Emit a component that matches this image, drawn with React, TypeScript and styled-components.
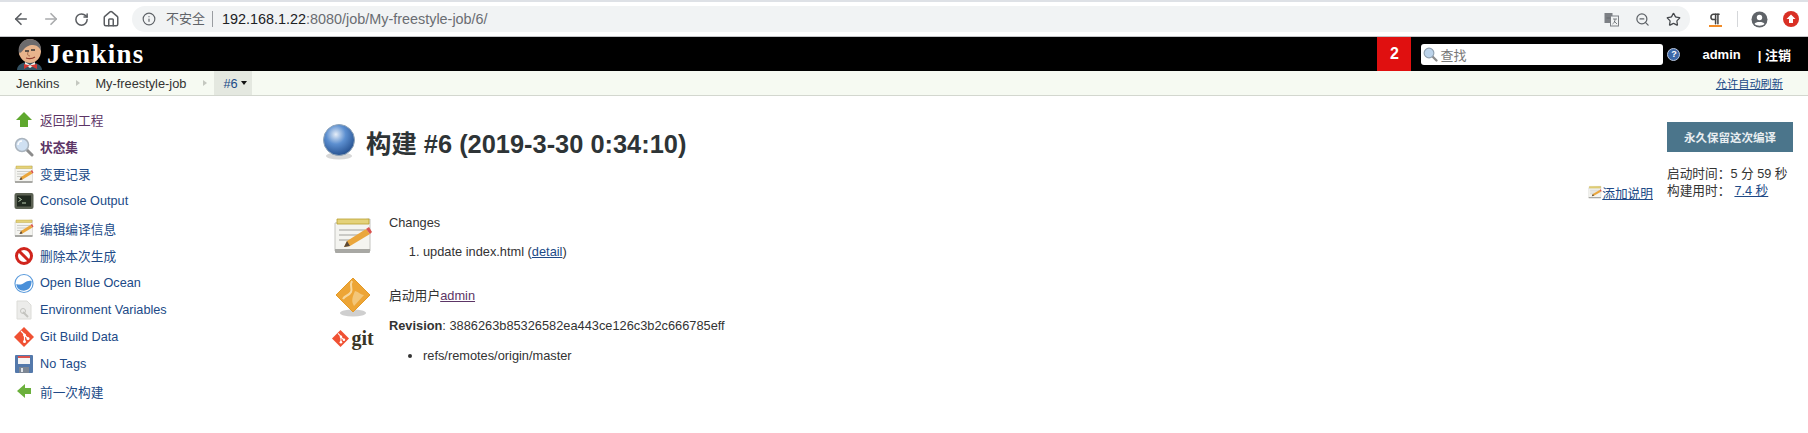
import styled, { createGlobalStyle } from "styled-components";
import { ArrowLeft, ArrowRight, RotateCw, Home, Info, ZoomOut, Star, Pilcrow } from "lucide-react";

const GlobalStyle = createGlobalStyle`
    html, body {
        margin: 0;
        padding: 0;
        background: #ffffff;
    }
    body {
        font-family: "Liberation Sans", "Noto Sans CJK SC", sans-serif;
        font-size: 12.8px;
        color: #333333;
        overflow: hidden;
    }
`;

const Page = styled.div`
    width: 1808px;
    height: 433px;
    overflow: hidden;
`;

/* browser chrome */
const Toolbar = styled.div`
    display: flex;
    align-items: center;
    height: 34px;
    border-top: 2px solid #dee1e6;
    border-bottom: 1px solid #c4c6c9;
    padding-left: 6px;
    background: #ffffff;
`;
const NavButton = styled.div<{ $off?: boolean }>`
    display: flex;
    align-items: center;
    justify-content: center;
    width: 30px;
    color: ${(p) => (p.$off ? "#a9abad" : "#5a5d61")};
`;
const Omnibox = styled.div`
    display: flex;
    align-items: center;
    width: 1558px;
    height: 26px;
    margin-left: 6px;
    padding-left: 10px;
    box-sizing: border-box;
    border-radius: 13px;
    background: #f1f3f4;
    color: #5f6368;
`;
const Insecure = styled.span`
    margin-left: 10px;
    padding-right: 7px;
    border-right: 1px solid #9a9da1;
    line-height: 16px;
    font-size: 13px;
`;
const Host = styled.span`
    margin-left: 9px;
    color: #202124;
    font-size: 14.4px;
`;
const UrlRest = styled.span`
    color: #6a6d72;
    font-size: 14.4px;
`;
const OmniIcons = styled.div`
    display: flex;
    align-items: center;
    gap: 16px;
    margin-left: auto;
    margin-right: 9px;
`;
const Extensions = styled.div`
    display: flex;
    align-items: center;
    margin-left: 18px;
`;
const PilcrowBox = styled.div`
    display: flex;
    flex-direction: column;
    align-items: center;
    width: 14px;
`;
const OrangeArrow = styled.div`
    width: 13px;
    height: 2px;
    margin-top: -1px;
    background: #f28c28;
`;
const Divider = styled.div`
    width: 1px;
    height: 16px;
    margin: 0 13px 0 15px;
    background: #d5d7da;
`;
const RedDot = styled.div`
    display: flex;
    margin-left: 15px;
`;

/* jenkins header */
const Header = styled.div`
    display: flex;
    align-items: center;
    height: 34px;
    background: #000000;
    color: #ffffff;
`;
const Logo = styled.div`
    display: flex;
    align-items: center;
    padding-left: 16px;
`;
const LogoText = styled.span`
    margin-left: 3px;
    font-family: "Liberation Serif", serif;
    font-size: 27px;
    font-weight: 700;
    letter-spacing: 1.3px;
`;
const Badge = styled.div`
    display: flex;
    align-items: center;
    justify-content: center;
    align-self: stretch;
    width: 34px;
    margin-left: auto;
    background: #e01010;
    font-size: 16px;
    font-weight: 700;
`;
const Search = styled.div`
    display: flex;
    align-items: center;
    gap: 2px;
    width: 242px;
    height: 21px;
    margin-left: 10px;
    padding-left: 2px;
    box-sizing: border-box;
    border-radius: 3px;
    background: #ffffff;
    color: #777777;
    font-size: 13px;
`;
const HelpDot = styled.div`
    display: flex;
    align-items: center;
    justify-content: center;
    width: 13px;
    height: 13px;
    margin-left: 4px;
    border-radius: 50%;
    border: 1px solid #b9c6dc;
    box-sizing: border-box;
    background: #3d68a8;
    font-size: 9px;
    font-weight: 700;
`;
const UserLink = styled.span`
    margin-left: 22px;
    font-size: 13px;
    font-weight: 700;
`;
const Logout = styled.span`
    margin: 0 17px 0 17px;
    font-size: 13px;
    font-weight: 700;
    white-space: nowrap;
`;

/* breadcrumbs */
const Crumbs = styled.div`
    display: flex;
    align-items: center;
    height: 24px;
    padding-left: 16px;
    border-bottom: 1px solid #d3d7cf;
    background: #f6faf2;
`;
const Crumb = styled.span`
    color: #333333;
`;
const CrumbArrow = styled.span`
    width: 0;
    height: 0;
    margin: 0 15px 0 17px;
    border-left: 4px solid #c4c8c0;
    border-top: 3px solid transparent;
    border-bottom: 3px solid transparent;
`;
const CrumbCurrent = styled.span`
    display: flex;
    align-items: center;
    height: 24px;
    margin-left: -8px;
    padding: 0 5px 0 9px;
    background: #e4e8e0;
    color: #204a87;
`;
const Caret = styled.span`
    width: 0;
    height: 0;
    margin-left: 3px;
    border-top: 4px solid #111111;
    border-left: 3px solid transparent;
    border-right: 3px solid transparent;
`;
const AutoRefresh = styled.a`
    margin-left: auto;
    margin-right: 25px;
    color: #204a87;
    font-size: 11.2px;
    text-decoration: underline;
`;

/* body */
const Main = styled.div`
    display: flex;
`;
const Side = styled.div`
    display: flex;
    flex-direction: column;
    width: 322px;
    padding: 10px 0 0 14px;
    box-sizing: border-box;
`;
const SideItem = styled.a<{ $visited?: boolean; $bold?: boolean }>`
    display: flex;
    align-items: center;
    height: 27.2px;
    color: ${(p) => (p.$visited ? "#5c3566" : "#204a87")};
    font-size: 12.7px;
    font-weight: ${(p) => (p.$bold ? 700 : 400)};
`;
const SideIcon = styled.span`
    display: flex;
    width: 20px;
    height: 20px;
    margin-right: 6px;
`;
const Center = styled.div`
    flex: 1;
    display: flex;
    flex-direction: column;
`;
const TitleRow = styled.div`
    display: flex;
    align-items: center;
    height: 48px;
    margin-top: 22px;
`;
const Title = styled.h1`
    margin: 0 0 0 10px;
    color: #2e3436;
    font-size: 25.4px;
    font-weight: 700;
`;
const DescLink = styled.div`
    display: flex;
    align-items: center;
    justify-content: flex-end;
    height: 18px;
    margin-top: 17px;
    margin-right: 14px;
    color: #204a87;
    font-size: 12.7px;
    text-decoration: underline;
`;
const Build = styled.div<{ $gap: number }>`
    display: grid;
    grid-template-columns: 62px 1fr;
    column-gap: 5px;
    margin-top: ${(p) => p.$gap}px;
`;
const IconCell = styled.div<{ $top: number }>`
    display: flex;
    flex-direction: column;
    align-items: center;
    gap: 12px;
    padding-top: ${(p) => p.$top}px;
`;
const Block = styled.div<{ $top?: number }>`
    padding-top: ${(p) => p.$top ?? 0}px;
`;
const Label = styled.div`
    line-height: 18px;
`;
const Spaced = styled(Label)`
    margin-top: 12px;
`;
const Strong = styled.strong`
    font-weight: 700;
`;
const Numbered = styled.ol`
    margin: 11px 0 0;
    padding-left: 34px;
    line-height: 18px;
`;
const Bullets = styled.ul`
    margin: 12px 0 0;
    padding-left: 34px;
    line-height: 18px;
`;
const Link = styled.a<{ $visited?: boolean }>`
    color: ${(p) => (p.$visited ? "#5c3566" : "#204a87")};
    text-decoration: underline;
`;
const Aside = styled.div`
    width: 141px;
    padding-top: 26px;
`;
const KeepButton = styled.div`
    display: flex;
    align-items: center;
    justify-content: center;
    width: 126px;
    height: 30px;
    background: #4b758b;
    color: #e8eef1;
    font-size: 11.5px;
    font-weight: 700;
`;
const Times = styled.div`
    margin-top: 14px;
    line-height: 17px;
    color: #333333;
    font-size: 12.7px;
`;
const TimeLink = styled(Link)`
    margin-left: 4px;
`;

function Jenkins() {
    return (
        <svg width="28" height="32" viewBox="0 0 28 32">
            <path d="M1 32c0-5 5-8 12-8s13 3 13 8z" fill="#335061" />
            <path d="M9 24l5 3 5-3v3l-5 3-5-3z" fill="#f0f0e8" />
            <path d="M8 26l6 1.5-6 3.5zM21 26l-7 1.5 7 3.5z" fill="#d33833" />
            <ellipse cx="14" cy="13" rx="11" ry="12" fill="#e8b48c" />
            <path d="M3 16C1 7 7 1 14 1s12 5 11 12c-1-3-4-6-8-6-5 0-6 2-8 3-2 2-3 4-6 6z" fill="#6d6b6d" />
            <path d="M4 14c-2 2 0 5 2 4z" fill="#e8b48c" />
            <path d="M9 13h4M15 12h4" stroke="#333" strokeWidth="1.4" />
            <path d="M12 14c-1 3 0 4 2 4" stroke="#a86f4f" strokeWidth="1" fill="none" />
            <path d="M10 20c3 1 6 1 9-1" stroke="#8f3b2e" strokeWidth="1.2" fill="none" />
        </svg>
    );
}

function Arrow({ left }: { left?: boolean }) {
    return (
        <svg width="20" height="20" viewBox="0 0 20 20">
            <path
                d={left ? "M3 10l8-7v4h6v6h-6v4z" : "M10 2l8 8h-4v7H6v-7H2z"}
                fill={left ? "#6bb03c" : "#5fa82e"}
            />
        </svg>
    );
}

function Magnifier() {
    return (
        <svg width="20" height="20" viewBox="0 0 20 20">
            <path d="M12 12l6 6" stroke="#8c8c8c" strokeWidth="3" strokeLinecap="round" />
            <circle cx="8" cy="8" r="6.5" fill="#cfe0f2" stroke="#aab4be" strokeWidth="1.5" />
            <path d="M4 8a4 4 0 0 1 4-4" stroke="#fff" strokeWidth="1.5" fill="none" />
        </svg>
    );
}

function Notepad({ size = 20 }: { size?: number }) {
    return (
        <svg width={size} height={size} viewBox="0 0 40 40">
            <path d="M2 8l35-4v32H2z" fill="#f4f4f0" stroke="#c4c4c0" strokeWidth="1" />
            <path d="M2 34l35 0v3a1 1 0 0 1-1 1H3a1 1 0 0 1-1-1z" fill="#a8a8a4" />
            <path d="M4 4h32v5H4z" fill="#e4d27a" stroke="#b89f2e" strokeWidth="0.8" />
            <path d="M6 15h26M6 20h20M6 25h14" stroke="#bcbcb8" strokeWidth="1.4" />
            <path d="M11 32l3-6 19-12 4 5-20 12z" fill="#eaa63c" />
            <path d="M33 14l3-2 3 5-2 2z" fill="#d9534f" />
            <path d="M11 32l3-6 3 5z" fill="#5a4a3a" />
        </svg>
    );
}

function Terminal() {
    return (
        <svg width="20" height="20" viewBox="0 0 20 20">
            <rect x="0.5" y="2" width="19" height="16" rx="2" fill="#5b6153" />
            <rect x="3" y="4.5" width="14" height="11" fill="#20291f" />
            <path d="M4.5 6.5l3 2-3 2M8 12h4" stroke="#bcd0b4" strokeWidth="1" fill="none" />
        </svg>
    );
}

function NoEntry() {
    return (
        <svg width="20" height="20" viewBox="0 0 20 20">
            <circle cx="10" cy="10" r="7.5" fill="#ffffff" stroke="#d0241c" strokeWidth="3" />
            <path d="M5 5l10 10" stroke="#d0241c" strokeWidth="3" />
        </svg>
    );
}

function Ocean() {
    return (
        <svg width="21" height="21" viewBox="0 0 21 21">
            <circle cx="10.5" cy="10.5" r="9.5" fill="#ffffff" stroke="#5b9bdc" strokeWidth="1.2" />
            <path d="M2.5 11c3 1 5 1 8-1s6-3 8-2c0 6-3 10-8 10s-8-3-8-7z" fill="#4a90d9" />
        </svg>
    );
}

function EnvFile() {
    return (
        <svg width="20" height="20" viewBox="0 0 20 20">
            <path d="M3 1h10l4 4v14H3z" fill="#ececea" stroke="#dcdcd8" />
            <path d="M9 12l5 5" stroke="#c4c4c0" strokeWidth="2" />
            <circle cx="9" cy="11" r="2.5" fill="none" stroke="#c4c4c0" />
        </svg>
    );
}

function GitDiamond({ size = 20 }: { size?: number }) {
    return (
        <svg width={size} height={size} viewBox="0 0 20 20">
            <path d="M10 0l10 10-10 10L0 10z" fill="#f05133" />
            <path d="M7 4l3.5 3.5V14M10.5 8L14 11.5" stroke="#fff" strokeWidth="1.2" fill="none" />
            <circle cx="10.5" cy="14.5" r="1.5" fill="#fff" />
            <circle cx="10.5" cy="8" r="1.5" fill="#fff" />
            <circle cx="14" cy="11.5" r="1.5" fill="#fff" />
        </svg>
    );
}

function Floppy() {
    return (
        <svg width="20" height="20" viewBox="0 0 20 20">
            <rect x="1" y="1" width="18" height="18" rx="1" fill="#5479ab" />
            <rect x="4" y="2" width="12" height="8" fill="#f4f4f4" />
            <path d="M4 2h12v2H4z" fill="#d9534f" />
            <rect x="5" y="13" width="10" height="6" fill="#7d8794" />
            <rect x="7" y="14" width="2" height="4" fill="#dfe3e8" />
        </svg>
    );
}

function Ball() {
    return (
        <svg width="34" height="36" viewBox="0 0 34 36">
            <defs>
                <radialGradient id="ball" cx="40%" cy="32%" r="70%">
                    <stop offset="0%" stopColor="#e6eef8" />
                    <stop offset="45%" stopColor="#5c8fd0" />
                    <stop offset="100%" stopColor="#25508f" />
                </radialGradient>
            </defs>
            <ellipse cx="17" cy="32" rx="13" ry="3.5" fill="#d8d8d8" />
            <circle cx="17" cy="16" r="15.5" fill="url(#ball)" stroke="#8fa4b8" />
        </svg>
    );
}

function UserDiamond() {
    return (
        <svg width="38" height="40" viewBox="0 0 38 40">
            <ellipse cx="19" cy="36" rx="13" ry="3.5" fill="#cfcfcf" />
            <path d="M19 1l17 17-17 17L2 18z" fill="#eda536" stroke="#e39a28" />
            <path d="M18 4c-3 5 1 7-1 11s-6 3-8 7" stroke="#f7d79c" strokeWidth="2" fill="none" />
            <path d="M21 14c4 1 6 4 9 4l-10 11c-2-4-3-6 1-15z" fill="#f3c679" />
        </svg>
    );
}

const GitWord = styled.span`
    margin-left: 2px;
    color: #3a3524;
    font-family: "Liberation Serif", serif;
    font-size: 20px;
    font-weight: 700;
    line-height: 18px;
`;
const GitLogo = styled.div`
    display: flex;
    align-items: center;
`;

function App() {
    return (
        <Page>
            <GlobalStyle />
            <Toolbar>
                <NavButton><ArrowLeft size={18} strokeWidth={2.2} /></NavButton>
                <NavButton $off><ArrowRight size={18} strokeWidth={2.2} /></NavButton>
                <NavButton><RotateCw size={15} strokeWidth={2.4} /></NavButton>
                <NavButton><Home size={18} strokeWidth={2} /></NavButton>
                <Omnibox>
                    <Info size={14} strokeWidth={2} />
                    <Insecure>不安全</Insecure>
                    <Host>192.168.1.22</Host>
                    <UrlRest>:8080/job/My-freestyle-job/6/</UrlRest>
                    <OmniIcons>
                        <svg width="15" height="15" viewBox="0 0 15 15">
                            <rect x="0.5" y="1" width="8" height="10" fill="#7d8085" />
                            <rect x="6.5" y="4" width="8" height="10" fill="#f1f3f4" stroke="#7d8085" />
                            <path d="M2.5 6h4M9 7h4M11 7c0 3-1 4-2.500 5M10 9l3 3" stroke="#5f6368" strokeWidth="0.8" fill="none" />
                        </svg>
                        <ZoomOut size={15} strokeWidth={2} />
                        <Star size={15} strokeWidth={2} color="#44474b" />
                    </OmniIcons>
                </Omnibox>
                <Extensions>
                    <PilcrowBox>
                        <Pilcrow size={14} strokeWidth={2.6} color="#444444" />
                        <OrangeArrow />
                    </PilcrowBox>
                    <Divider />
                    <svg width="17" height="17" viewBox="0 0 17 17">
                        <circle cx="8.5" cy="8.5" r="8" fill="#5f6368" />
                        <circle cx="8.5" cy="6.5" r="2.7" fill="#ffffff" />
                        <path d="M3.5 13c1-2.6 9-2.6 10 0-2.5 2.2-7.5 2.2-10 0z" fill="#ffffff" />
                    </svg>
                    <RedDot>
                        <svg width="16" height="16" viewBox="0 0 16 16">
                            <circle cx="8" cy="8" r="8" fill="#d93025" />
                            <path d="M8 3.5L12.5 8H10v4H6V8H3.5z" fill="#ffffff" />
                        </svg>
                    </RedDot>
                </Extensions>
            </Toolbar>
            <Header>
                <Logo>
                    <Jenkins />
                    <LogoText>Jenkins</LogoText>
                </Logo>
                <Badge>2</Badge>
                <Search>
                    <svg width="15" height="15" viewBox="0 0 20 20">
                        <path d="M12 12l6 6" stroke="#8c8c8c" strokeWidth="3" strokeLinecap="round" />
                        <circle cx="8" cy="8" r="6.5" fill="#bcd3ea" stroke="#8fa0b0" strokeWidth="1.5" />
                    </svg>
                    查找
                </Search>
                <HelpDot>?</HelpDot>
                <UserLink>admin</UserLink>
                <Logout>| 注销</Logout>
            </Header>
            <Crumbs>
                <Crumb>Jenkins</Crumb>
                <CrumbArrow />
                <Crumb>My-freestyle-job</Crumb>
                <CrumbArrow />
                <CrumbCurrent>
                    #6
                    <Caret />
                </CrumbCurrent>
                <AutoRefresh>允许自动刷新</AutoRefresh>
            </Crumbs>
            <Main>
                <Side>
                    <SideItem $visited><SideIcon><Arrow /></SideIcon>返回到工程</SideItem>
                    <SideItem $visited $bold><SideIcon><Magnifier /></SideIcon>状态集</SideItem>
                    <SideItem><SideIcon><Notepad /></SideIcon>变更记录</SideItem>
                    <SideItem><SideIcon><Terminal /></SideIcon>Console Output</SideItem>
                    <SideItem><SideIcon><Notepad /></SideIcon>编辑编译信息</SideItem>
                    <SideItem><SideIcon><NoEntry /></SideIcon>删除本次生成</SideItem>
                    <SideItem><SideIcon><Ocean /></SideIcon>Open Blue Ocean</SideItem>
                    <SideItem><SideIcon><EnvFile /></SideIcon>Environment Variables</SideItem>
                    <SideItem><SideIcon><GitDiamond /></SideIcon>Git Build Data</SideItem>
                    <SideItem><SideIcon><Floppy /></SideIcon>No Tags</SideItem>
                    <SideItem><SideIcon><Arrow left /></SideIcon>前一次构建</SideItem>
                </Side>
                <Center>
                    <TitleRow>
                        <Ball />
                        <Title>构建 #6 (2019-3-30 0:34:10)</Title>
                    </TitleRow>
                    <DescLink>
                        <Notepad size={14} />
                        添加说明
                    </DescLink>
                    <Build $gap={13}>
                        <IconCell $top={1}>
                            <Notepad size={40} />
                        </IconCell>
                        <Block>
                            <Label>Changes</Label>
                            <Numbered>
                                <li>
                                    update index.html (<Link>detail</Link>)
                                </li>
                            </Numbered>
                        </Block>
                    </Build>
                    <Build $gap={14}>
                        <IconCell $top={2}>
                            <UserDiamond />
                            <GitLogo>
                                <GitDiamond size={17} />
                                <GitWord>git</GitWord>
                            </GitLogo>
                        </IconCell>
                        <Block $top={12}>
                            <Label>
                                启动用户<Link $visited>admin</Link>
                            </Label>
                            <Spaced>
                                <Strong>Revision</Strong>: 3886263b85326582ea443ce126c3b2c666785eff
                            </Spaced>
                            <Bullets>
                                <li>refs/remotes/origin/master</li>
                            </Bullets>
                        </Block>
                    </Build>
                </Center>
                <Aside>
                    <KeepButton>永久保留这次编译</KeepButton>
                    <Times>
                        启动时间：5 分 59 秒
                        <br />
                        构建用时：<TimeLink>7.4 秒</TimeLink>
                    </Times>
                </Aside>
            </Main>
        </Page>
    );
}

export default App;
